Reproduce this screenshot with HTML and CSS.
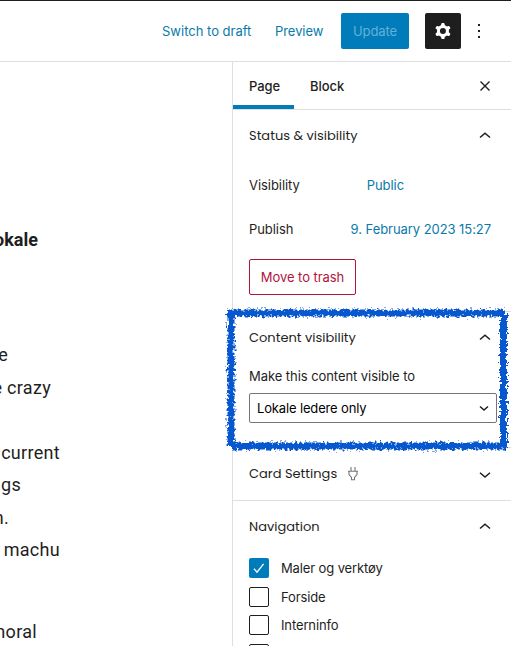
FILE: index.html
```html
<!DOCTYPE html>
<html lang="en">
<head>
    <meta charset="UTF-8">
    <meta name="viewport" content="width=device-width, initial-scale=1.0">
    <title>Edit Page</title>
    <link rel="stylesheet" href="styles.css">
</head>
<body>
    <header class="top-bar">
        <a class="link draft">Switch to draft</a>
        <a class="link preview">Preview</a>
        <button class="update-btn">Update</button>
        <button class="settings-btn" aria-label="Settings">
            <svg width="24" height="24" viewBox="0 0 24 24"><path fill="#fff" fill-rule="evenodd" d="M10.289 4.836A1 1 0 0111.275 4h1.306a1 1 0 01.987.836l.244 1.466c.787.26 1.503.679 2.108 1.218l1.393-.522a1 1 0 011.216.437l.653 1.130a1 1 0 01-.23 1.273l-1.148.944a6.025 6.025 0 010 2.435l1.149.946a1 1 0 01.23 1.272l-.653 1.130a1 1 0 01-1.216.437l-1.394-.522c-.605.54-1.320.958-2.108 1.218l-.244 1.466a1 1 0 01-.987.836h-1.306a1 1 0 01-.986-.836l-.244-1.466a5.995 5.995 0 01-2.108-1.218l-1.394.522a1 1 0 01-1.217-.436l-.653-1.131a1 1 0 01.23-1.272l1.149-.946a6.026 6.026 0 010-2.435l-1.148-.944a1 1 0 01-.23-1.272l.653-1.131a1 1 0 011.217-.437l1.393.522a5.994 5.994 0 012.108-1.218l.244-1.466zM14.929 12a3 3 0 11-6 0 3 3 0 016 0z"/></svg>
        </button>
        <svg class="more" width="24" height="24" viewBox="0 0 24 24"><path fill="#1e1e1e" d="M11 5h2v2h-2zM11 11h2v2h-2zM11 17h2v2h-2z"/></svg>
    </header>

    <div class="editor">
        <main class="content">
            <p class="line lead">okale</p>
            <p class="line w-short">e</p>
            <p class="line w-crazy">e crazy</p>
            <p class="line w-full gap">current</p>
            <p class="line w-gs">gs</p>
            <p class="line w-n">n.</p>
            <p class="line w-full">machu</p>
            <p class="line w-moral last">moral</p>
        </main>

        <aside class="sidebar">
            <div class="tabs">
                <span class="tab active">Page</span>
                <span class="tab">Block</span>
                <svg class="close" width="24" height="24" viewBox="0 0 24 24"><path fill="none" stroke="#1e1e1e" stroke-width="1.4" d="M7.500 7.500l9 9M16.500 7.500l-9 9"/></svg>
            </div>

            <section class="panel status">
                <h2 class="title">Status &amp; visibility
                    <svg class="chevron" width="24" height="24" viewBox="0 0 24 24"><path d="M7 13.500L12 9.300l5 4.200"/></svg>
                </h2>
                <div class="row"><span>Visibility</span><a class="link public">Public</a></div>
                <div class="row"><span>Publish</span><a class="link date">9. February 2023 15:27</a></div>
                <button class="trash-btn">Move to trash</button>
            </section>

            <section class="panel visibility">
                <h2 class="title">Content visibility
                    <svg class="chevron" width="24" height="24" viewBox="0 0 24 24"><path d="M7 13.500L12 9.300l5 4.200"/></svg>
                </h2>
                <div class="label">Make this content visible to</div>
                <div class="select"><span>Lokale ledere only</span>
                    <svg class="chevron" width="24" height="24" viewBox="0 0 24 24"><path d="M8 10.500L12 14l4-3.500"/></svg>
                </div>
                <!-- hand drawn marker frame -->
                <svg class="marker" width="290" height="150" viewBox="0 0 290 150">
                    <filter id="rough" x="0" y="0" width="290" height="150" filterUnits="userSpaceOnUse" color-interpolation-filters="sRGB">
                        <feTurbulence type="fractalNoise" baseFrequency="0.4" numOctaves="2" seed="4" result="noise"/>
                        <feDisplacementMap in="SourceGraphic" in2="noise" scale="8" xChannelSelector="R" yChannelSelector="G"/>
                    </filter>
                    <path filter="url(#rough)" fill="none" stroke="#0758cf" stroke-width="7" d="M7 9H284M11 6V142M283.500 9V145M12 142H286"/>
                </svg>
            </section>

            <section class="panel card">
                <h2 class="title">Card Settings
                    <svg class="plug" width="12" height="16" viewBox="0 0 12 16"><path fill="none" stroke="#757575" stroke-width="1.1" d="M4 1v4M8 1v4M1 5.300h10M2 5.300v3.200l2.500 3v2.300h3v-2.300l2.500-3V5.300"/></svg>
                    <svg class="chevron" width="24" height="24" viewBox="0 0 24 24"><path d="M7 10.700L12 15l5-4.300"/></svg>
                </h2>
            </section>

            <section class="panel nav">
                <h2 class="title">Navigation
                    <svg class="chevron" width="24" height="24" viewBox="0 0 24 24"><path d="M7 13.500L12 9.300l5 4.200"/></svg>
                </h2>
                <div class="check"><span class="box checked"><svg width="20" height="20" viewBox="0 0 20 20"><path fill="none" stroke="#fff" stroke-width="1.3" d="M5 10.800l3 3.400 6.600-8.400"/></svg></span>Maler og verktøy</div>
                <div class="check"><span class="box"></span>Forside</div>
                <div class="check"><span class="box"></span>Interninfo</div>
                <div class="check"><span class="box"></span></div>
            </section>
        </aside>
    </div>
</body>
</html>
```
FILE: styles.css
```css
:root {
    --primary-color: #007cba;
    --text-color: #1e1e1e;
    --border-color: #dedede;
}
* { box-sizing: border-box; }
body {
    margin: 0;
    height: 646px;
    overflow: hidden;
    font-family: Inter, sans-serif;
    font-size: 13px;
    letter-spacing: -0.06px;
    color: var(--text-color);
    background: #fff;
}
button { font-family: inherit; font-size: 13px; letter-spacing: -0.06px; padding: 0; border: none; border-radius: 2px; }
.link { color: #087aab; white-space: nowrap; }

.top-bar {
    display: flex;
    align-items: center;
    height: 62px;
    padding-left: 162px;
    border-top: 1px solid #1e1e1e;
    border-bottom: 1px solid var(--border-color);
}
.draft { width: 113px; letter-spacing: 0; }
.preview { width: 66px; }
.update-btn {
    width: 68px;
    height: 36px;
    background: var(--primary-color);
    color: #66b0d6;
}
.settings-btn {
    display: flex;
    align-items: center;
    justify-content: center;
    width: 36px;
    height: 36px;
    margin-left: 16px;
    background: var(--text-color);
}
.more { margin-left: 6px; }

.editor { display: flex; height: 584px; }
.content {
    width: 232px;
    overflow: hidden;
    font-family: Roboto, sans-serif;
    font-size: 18px;
    line-height: 32.5px;
    letter-spacing: 0.3px;
}
.line {
    display: flex;
    justify-content: flex-end;
    height: 32.5px;
    margin: 0;
    overflow: hidden;
    white-space: nowrap;
}
.lead { width: 38px; margin: 162px 0 82.700px; font-weight: 700; letter-spacing: 0; }
.w-short { width: 8px; }
.w-crazy { width: 51px; }
.w-full { width: 60px; }
.w-gs { width: 21px; }
.w-n { width: 9px; }
.w-moral { width: 37px; }
.gap { margin-top: 32.5px; }
.last { margin-top: 49px; }

.sidebar { width: 279px; border-left: 1px solid var(--border-color); }
.tabs {
    display: flex;
    height: 48px;
    border-bottom: 1px solid var(--border-color);
    font-weight: 500;
    line-height: 49px;
}
.tab { padding: 0 16px; }
.tab.active { width: 61px; padding-right: 0; border-bottom: 4px solid var(--primary-color); }
.close { margin: 12px 14px 0 auto; }

.panel { padding: 0 14px 0 16px; border-bottom: 1px solid var(--border-color); }
.title {
    display: flex;
    align-items: center;
    height: 51px;
    margin: 0;
    font-family: Poppins, Inter, sans-serif;
    font-size: 13px;
    font-weight: 400;
    letter-spacing: 0;
}
.chevron { margin-left: auto; }
.chevron path { fill: none; stroke: var(--text-color); stroke-width: 1.5; }

.status { height: 202px; }
.row { display: flex; align-items: center; height: 36px; margin: 6px 0 8px; }
.row + .row { margin: 0 0 12px; }
.public { margin-left: 67px; }
.date { margin-left: auto; margin-right: 6px; }
.trash-btn {
    width: 107px;
    height: 36px;
    border: 1px solid #b3143c;
    background: #fff;
    color: #b3143c;
}

.visibility { position: relative; height: 136px; }
.label { height: 16px; margin: 5px 0 9px; line-height: 16px; }
.select {
    display: flex;
    align-items: center;
    width: 248px;
    height: 30px;
    padding-left: 7px;
    border: 1px solid #757575;
    border-radius: 2px;
    color: #000;
    letter-spacing: -0.15px;
}
.marker { position: absolute; left: -13px; top: -8px; pointer-events: none; }

.card { height: 53px; }
.plug { margin-left: 10px; }
.nav { border-bottom: none; }
.nav .title { margin-bottom: 6px; }
.check { display: flex; align-items: center; gap: 12px; height: 20px; margin-bottom: 8.500px; letter-spacing: -0.12px; }
.box { width: 20px; height: 20px; border: 1px solid var(--text-color); border-radius: 2px; }
.box.checked { border: none; background: var(--primary-color); }
```
